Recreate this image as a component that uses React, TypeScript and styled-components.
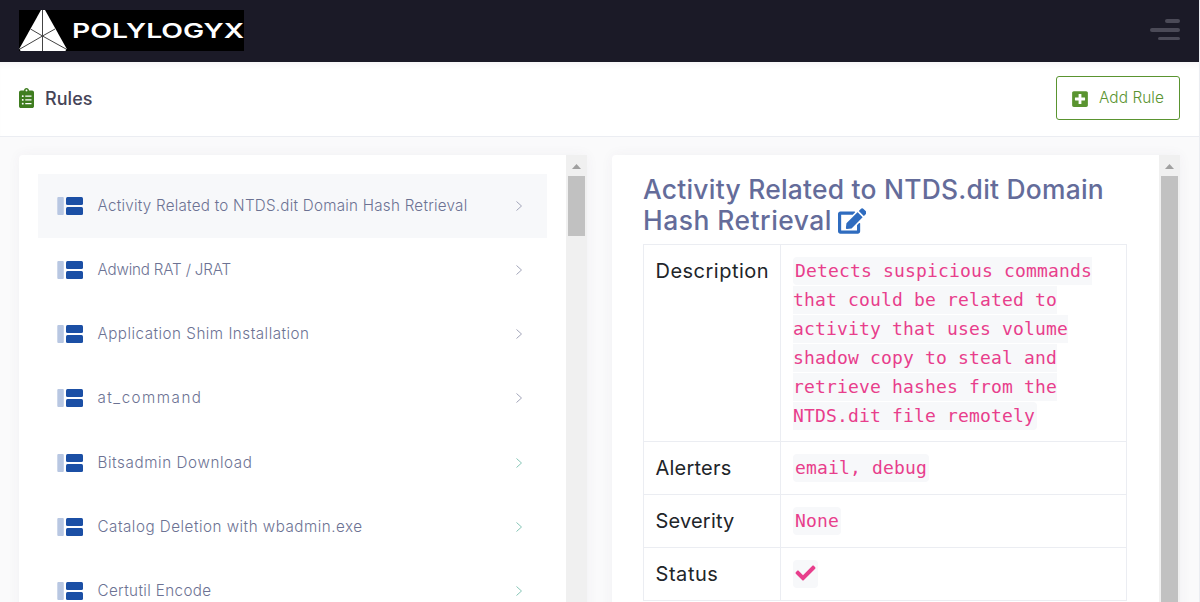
import React, { useLayoutEffect, useRef } from "react";
import styled, { createGlobalStyle } from "styled-components";
import { FaClipboardList, FaEdit, FaCheck, FaPlusSquare } from "react-icons/fa";

const Global = createGlobalStyle`
  * { box-sizing: border-box; }
  html, body { margin: 0; overflow: hidden; }
  body { font-family: Inter, "Open Sans", sans-serif; background: #fafafb; }
`;

const Page = styled.div`
  width: 1200px;
  height: 602px;
  overflow: hidden;
  display: flex;
  flex-direction: column;
  border-right: 1px solid #ebedf2;
`;

const TopBar = styled.header`
  height: 62px;
  flex: none;
  background: #1b1a27;
  display: flex;
  align-items: flex-start;
  justify-content: space-between;
  padding: 10px 19px 0 19px;
`;

const Logo = styled.svg`
  display: block;
  width: 225px;
  height: 41px;
  background: #000;
`;

const Burger = styled.div`
  display: flex;
  flex-direction: column;
  align-items: flex-end;
  gap: 5px;
  padding-top: 9px;
`;

const Bar = styled.span<{ $w: number; $h: number }>`
  width: ${(p) => p.$w}px;
  height: ${(p) => p.$h}px;
  border-radius: 2px;
  background: #4b4a57;
`;

const SubHeader = styled.div`
  height: 75px;
  flex: none;
  background: #fff;
  border-bottom: 1px solid #ebedf2;
  box-shadow: inset 0 6px 6px -4px rgba(60, 50, 90, 0.06);
  display: flex;
  align-items: center;
  justify-content: space-between;
  padding: 0 19px 3px 19px;
`;

const Title = styled.h1`
  margin: 0;
  display: flex;
  align-items: center;
  gap: 11px;
  font-size: 18px;
  line-height: 24px;
  font-weight: 450;
  color: #464457;
  span { padding-top: 2px; }
  svg { color: #3f7d20; width: 15px; height: 20px; }
`;

const AddButton = styled.button`
  width: 124px;
  height: 44px;
  padding: 0 15px 0 15px;
  border: 1px solid #5a9430;
  border-radius: 3px;
  background: #fff;
  color: #5a9430;
  font: 300 15.4px/20px Inter, sans-serif;
  display: flex;
  align-items: center;
  justify-content: space-between;
  svg { width: 16px; height: 18px; margin-top: 2px; }
`;

const Content = styled.main`
  flex: 1;
  min-height: 0;
  display: flex;
  gap: 25px;
  padding: 18px 19px 0 19px;
`;

const Card = styled.section`
  width: 568px;
  height: 620px;
  display: flex;
  background: #fff;
  border-radius: 4px 0 0 0;
  box-shadow: 0 0 13px rgba(82, 63, 105, 0.05);
`;

const CardBody = styled.div<{ $pad: string }>`
  width: 547px;
  padding: ${(p) => p.$pad};
`;

const ScrollTrack = styled.div`
  width: 21px;
  background: #f0f0f0;
  display: flex;
  flex-direction: column;
  align-items: center;
  svg { display: block; width: 9px; height: 5px; margin: 9px 0 7px; }
`;

const ScrollThumb = styled.div<{ $h: number }>`
  width: 17px;
  height: ${(p) => p.$h}px;
  background: #c1c1c1;
`;

const RuleRow = styled.div<{ $active?: boolean }>`
  height: 64.15px;
  display: flex;
  align-items: center;
  padding: 0 25px 0 19px;
  background: ${(p) => (p.$active ? "#f7f8fa" : "transparent")};
  color: #6c7293;
  font-size: 15.2px;
  font-weight: 300;
  line-height: 20px;
`;

const RuleIcon = styled.svg`
  flex: none;
  width: 26px;
  height: 18px;
  margin-right: 14.5px;
`;

const Chevron = styled.svg<{ $tint: string }>`
  flex: none;
  width: 6px;
  height: 10px;
  margin-left: auto;
  fill: none;
  stroke: ${(p) => p.$tint};
`;

const Heading = styled.h2`
  margin: 0 0 8px;
  font-size: 26.4px;
  font-weight: 450;
  line-height: 31px;
  color: #646c9a;
`;

const HeadingLine = styled.span`
  display: flex;
  align-items: center;
  height: 31px;
  svg { width: 28.5px; height: 26px; margin-left: 5.5px; color: #2f6cbf; }
`;

const Table = styled.div`
  width: 484px;
  display: grid;
  grid-template-columns: 137px 346px;
  border-left: 1px solid #ebedf2;
  border-top: 1px solid #ebedf2;
`;

const Cell = styled.div<{ $h: number }>`
  height: ${(p) => p.$h}px;
  padding: 11px 0 0 11.5px;
  border-right: 1px solid #ebedf2;
  border-bottom: 1px solid #ebedf2;
  font-size: 20px;
  font-weight: 400;
  line-height: 30px;
  color: #212529;
`;

const CodeCell = styled(Cell)`
  padding-left: 12px;
  font: 18px/29px "DejaVu Sans Mono", monospace;
  letter-spacing: 0.16px;
`;

const Code = styled.code`
  padding: 3px 2px 4px;
  border-radius: 4px;
  background: #f7f8fa;
  color: #e83e8c;
  font: inherit;
  svg { width: 21px; height: 20px; vertical-align: -3px; }
`;

const Run = styled.span`
  white-space: nowrap;
`;

/* Tracks a run of text so that it takes up exactly the given width. */
function Fit({ w, children }: { w: number; children: string }) {
  const ref = useRef<HTMLSpanElement>(null);
  useLayoutEffect(() => {
    const el = ref.current;
    if (!el) return;
    el.style.letterSpacing = "0px";
    const natural = el.getBoundingClientRect().width;
    el.style.letterSpacing = `${(w - natural) / children.length}px`;
  }, [w, children]);
  return <Run ref={ref}>{children}</Run>;
}

const rules: [string, number][] = [
  ["Activity Related to NTDS.dit Domain Hash Retrieval", 370],
  ["Adwind RAT / JRAT", 133.5],
  ["Application Shim Installation", 212],
  ["at_command", 105],
  ["Bitsadmin Download", 155],
  ["Catalog Deletion with wbadmin.exe", 265],
  ["Certutil Encode", 114],
];

const Scroll = ({ thumb }: { thumb: number }) => (
  <ScrollTrack>
    <svg viewBox="0 0 9 5"><path d="M4.5 0L9 5H0z" fill="#a0a0a0" /></svg>
    <ScrollThumb $h={thumb} />
  </ScrollTrack>
);

export default function App() {
  return (
    <Page>
      <Global />
      <TopBar>
        <Logo viewBox="0 0 225 41">
          <path d="M22 0h4L47.500 38.500L46.500 41H1.500L.5 38.500z" fill="#fff" />
          <path d="M23.500 0V41M23.500 26L11.500 19M23.500 26L36 19M23.500 26L1 39M23.500 26L47 39" stroke="#444" strokeWidth="1" fill="none" />
          <text x="53" y="27.700" fill="#fff" fontFamily="Inter" fontWeight="600" fontSize="20.300" textLength="172" lengthAdjust="spacingAndGlyphs">POLYLOGYX</text>
        </Logo>
        <Burger>
          <Bar $w={15} $h={4} />
          <Bar $w={30} $h={4} />
          <Bar $w={22} $h={3} />
        </Burger>
      </TopBar>
      <SubHeader>
        <Title><FaClipboardList /><Fit w={47.5}>Rules</Fit></Title>
        <AddButton><FaPlusSquare /><Fit w={65}>Add Rule</Fit></AddButton>
      </SubHeader>
      <Content>
        <Card>
          <CardBody $pad="18.9px 19px 0">
            {rules.map(([name, w], i) => (
              <RuleRow key={name} $active={i === 0}>
                <RuleIcon viewBox="0 0 26 18">
                  <rect x="0.300" width="6.500" height="18" rx="1" fill="#b8c7e2" />
                  <rect x="9" width="17" height="8" rx="1.500" fill="#1b4fa5" />
                  <rect x="9" y="10" width="17" height="8" rx="1.500" fill="#1b4fa5" />
                </RuleIcon>
                <Fit w={w}>{name}</Fit>
                <Chevron viewBox="0 0 6 10" $tint={i > 3 ? "#86c5b6" : "#a2a5b9"}>
                  <path d="M.5 .5L5.500 5L.5 9.500" />
                </Chevron>
              </RuleRow>
            ))}
          </CardBody>
          <Scroll thumb={60} />
        </Card>
        <Card>
          <CardBody $pad="19px 31px 0">
            <Heading>
              <HeadingLine><Fit w={461}>Activity Related to NTDS.dit Domain</Fit></HeadingLine>
              <HeadingLine><Fit w={189}>Hash Retrieval</Fit><FaEdit /></HeadingLine>
            </Heading>
            <Table>
              <Cell $h={197}><Fit w={113.5}>Description</Fit></Cell>
              <CodeCell $h={197}>
                <Code>
                  Detects suspicious commands<br />that could be related to<br />activity that uses volume<br />
                  shadow copy to steal and<br />retrieve hashes from the<br />NTDS.dit file remotely
                </Code>
              </CodeCell>
              <Cell $h={53}><Fit w={76}>Alerters</Fit></Cell>
              <CodeCell $h={53}><Code>email, debug</Code></CodeCell>
              <Cell $h={53}><Fit w={79}>Severity</Fit></Cell>
              <CodeCell $h={53}><Code>None</Code></CodeCell>
              <Cell $h={53}><Fit w={63}>Status</Fit></Cell>
              <CodeCell $h={53}><Code><FaCheck /></Code></CodeCell>
            </Table>
          </CardBody>
          <Scroll thumb={440} />
        </Card>
      </Content>
    </Page>
  );
}
